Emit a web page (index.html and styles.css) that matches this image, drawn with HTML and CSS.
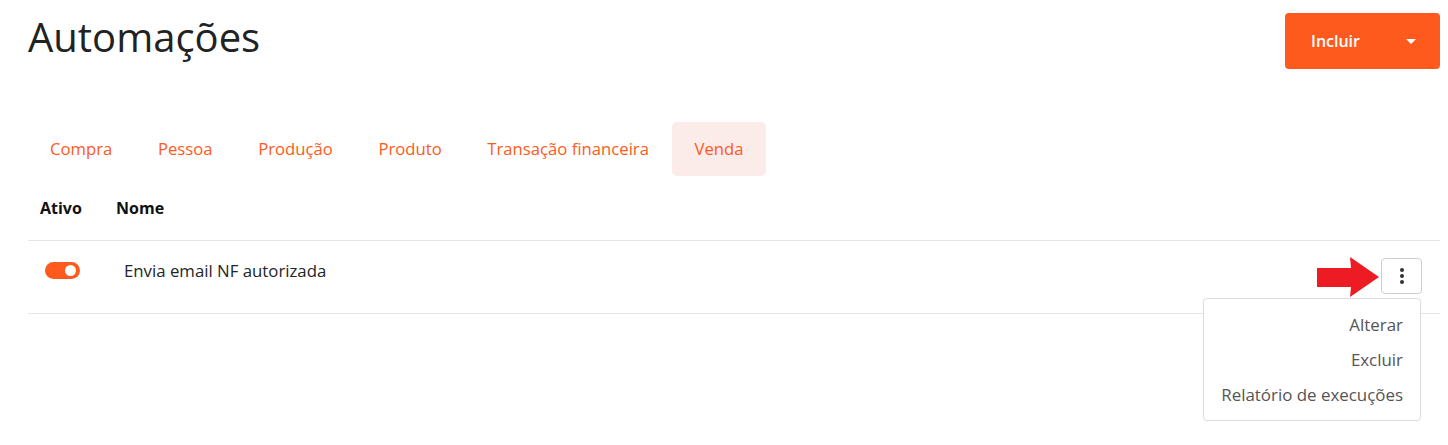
FILE: index.html
```html
<!DOCTYPE html>
<html lang="pt-BR">
<head>
<meta charset="utf-8">
<title>Automações</title>
<link rel="stylesheet" href="styles.css">
</head>
<body>
<div class="page">
  <header class="page-header">
    <h1 class="title">Automações</h1>
    <button class="btn-include" type="button">
      <span>Incluir</span>
      <svg class="caret" width="10" height="5" viewBox="0 0 10 5"><polygon points="0,0 10,0 5,5" fill="#fff"/></svg>
    </button>
  </header>

  <nav class="tabs">
    <a class="tab">Compra</a>
    <a class="tab">Pessoa</a>
    <a class="tab">Produção</a>
    <a class="tab">Produto</a>
    <a class="tab">Transação financeira</a>
    <a class="tab active">Venda</a>
  </nav>

  <div class="table">
    <div class="thead">
      <div class="th th-active">Ativo</div>
      <div class="th th-name">Nome</div>
    </div>
    <div class="row">
      <div class="cell cell-toggle"><span class="toggle"><span class="knob"></span></span></div>
      <div class="cell cell-name">Envia email NF autorizada</div>
      <div class="cell cell-actions">
        <div class="menu-wrap">
          <svg class="pointer-arrow" width="62" height="40" viewBox="0 0 62 40"><polygon points="0,11 34,11 33,0 62,20 33,40 34,30 0,30" fill="#ed1c24"/></svg>
          <button class="kebab" type="button">
            <svg width="4" height="16" viewBox="0 0 4 16"><circle cx="2" cy="2" r="2" fill="#333"/><circle cx="2" cy="8" r="2" fill="#333"/><circle cx="2" cy="14" r="2" fill="#333"/></svg>
          </button>
          <ul class="dropdown">
            <li>Alterar</li>
            <li>Excluir</li>
            <li>Relatório de execuções</li>
          </ul>
        </div>
      </div>
    </div>
  </div>
</div>
</body>
</html>
```

FILE: styles.css
```css
* { box-sizing: border-box; }
html, body { margin: 0; padding: 0; background: #fff; }
body {
  font-family: "Open Sans", "Noto Sans", sans-serif;
  font-size: 16px;
  color: #212529;
}
.page {
  padding: 13px 8px 0 28px;
  min-height: 445px;
}
.page-header {
  display: flex;
  justify-content: space-between;
  align-items: flex-start;
}
.title {
  margin: -3px 0 0 0;
  font-size: 40px;
  line-height: 54px;
  font-weight: 400;
  color: #222;
}
.btn-include {
  width: 155px;
  height: 56px;
  background: #fe5a1d;
  border: none;
  border-radius: 4px;
  color: #fff;
  font-family: inherit;
  font-size: 16px;
  font-weight: 600;
  display: flex;
  align-items: center;
  justify-content: space-between;
  padding: 0 24px 0 26px;
}
.caret { display: block; margin-top: 1px; }

.tabs {
  display: flex;
  margin-top: 53px;
}
.tab {
  display: block;
  padding: 15px 22.8px;
  font-size: 16.7px;
  line-height: 24px;
  color: #fe5a1d;
  border-radius: 5px;
}
.tab:first-child { padding-left: 22px; }
.tab.active { background: #fcece9; }

.thead {
  display: flex;
  padding: 20px 0 20px;
  line-height: 24px;
  font-weight: 700;
  color: #111;
  border-bottom: 1px solid #e6e6e6;
}
.th-active { width: 88px; padding-left: 12px; }
.th-name { flex: 1; }

.row {
  display: flex;
  height: 73px;
  border-bottom: 1px solid #e6e6e6;
}
.cell-toggle { width: 96px; padding: 21px 0 0 17px; }
.toggle {
  display: block;
  width: 35px;
  height: 17px;
  border-radius: 9px;
  background: #fe5a1d;
  position: relative;
}
.knob {
  position: absolute;
  right: 4px;
  top: 3px;
  width: 11px;
  height: 11px;
  border-radius: 50%;
  background: #fff;
}
.cell-name { flex: 1; padding-top: 18px; font-size: 16.8px; line-height: 24px; color: #212529; }
.cell-actions { padding: 17px 18px 0 0; }
.menu-wrap { position: relative; }
.kebab {
  width: 41px;
  height: 36px;
  background: #fff;
  border: 1px solid #cfcfcf;
  border-radius: 4px;
  display: flex;
  align-items: center;
  justify-content: center;
  padding: 0;
}
.kebab svg { display: block; margin-left: 1px; }
.pointer-arrow {
  position: absolute;
  left: -64px;
  top: -1px;
}
.dropdown {
  position: absolute;
  top: calc(100% + 4px);
  right: 1px;
  width: 218px;
  margin: 0;
  padding: 8px 0;
  list-style: none;
  background: #fff;
  border: 1px solid #dcdcdc;
  border-radius: 4px;
  z-index: 5;
}
.dropdown li {
  padding: 6px 17px 5px 0;
  font-size: 16.9px;
  line-height: 24px;
  text-align: right;
  color: #555;
  white-space: nowrap;
}
```
